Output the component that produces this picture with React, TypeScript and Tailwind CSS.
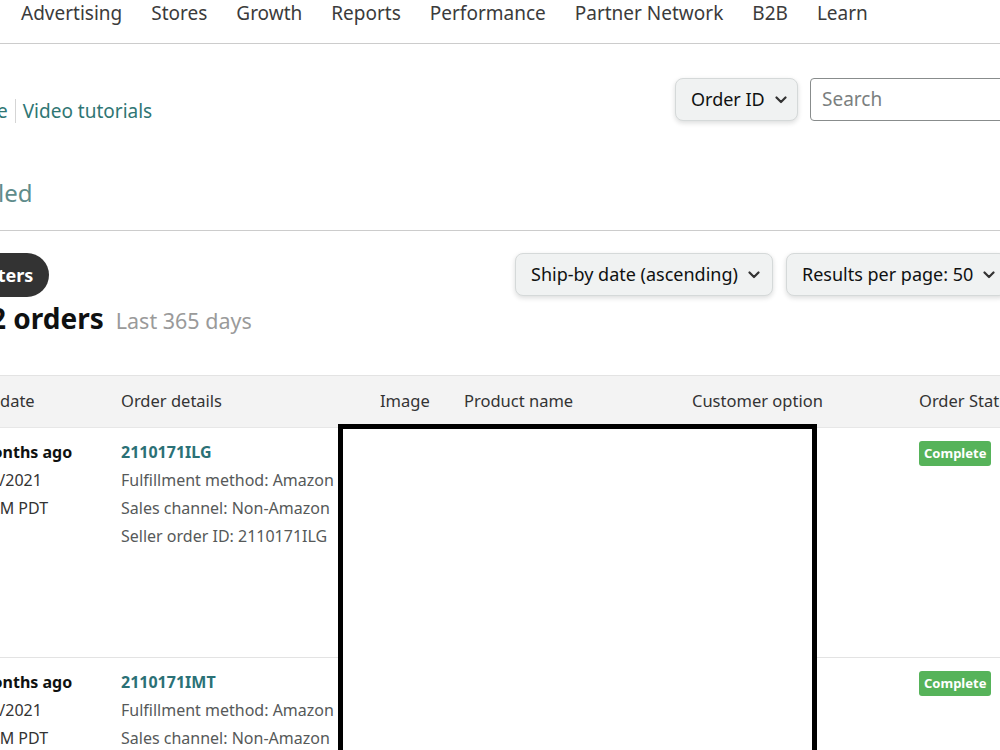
import React from "react";

const navItems = [
  "Advertising",
  "Stores",
  "Growth",
  "Reports",
  "Performance",
  "Partner Network",
  "B2B",
  "Learn",
];

const Chevron = ({ className }: { className?: string }) => (
  <svg viewBox="0 0 12 8" className={className} fill="none">
    <path d="M1.5 1.5L6 6l4.5-4.5" stroke="currentColor" strokeWidth="2.2" strokeLinecap="round" strokeLinejoin="round" />
  </svg>
);

const SelectButton = ({ label, className }: { label: string; className?: string }) => (
  <button
    className={`flex items-center justify-between h-[43px] shrink-0 whitespace-nowrap rounded-[8px] border border-[#d5d9d9] bg-[#f0f2f2] pl-[15px] pr-[12px] text-[18px] text-[#0f1111] shadow-[0_2px_5px_rgba(15,17,17,0.15)] ${className ?? ""}`}
  >
    <span>{label}</span>
    <Chevron className="ml-[10px] w-[12px] h-[8px] shrink-0 text-[#333]" />
  </button>
);

const orders = [{ id: "2110171ILG" }, { id: "2110171IMT" }];

export default function App() {
  return (
    <div className="relative w-[1000px] h-[750px] overflow-hidden bg-white font-['Noto_Sans',sans-serif] text-[#0f1111]">
      {/* top nav */}
      <div className="flex gap-[29px] pl-[21px] h-[44px] border-b border-[#cccccc] text-[19px] leading-[26px] text-[#3b3b3b] whitespace-nowrap">
        {navItems.map((item) => (
          <span key={item}>{item}</span>
        ))}
      </div>

      {/* help links + search */}
      <div className="flex justify-between h-[187px] border-b border-[#cccccc]">
        <div className="flex flex-col">
          <div className="mt-[54px] flex items-center text-[19px] leading-[26px] text-[#2f7674] whitespace-nowrap">
            <span className="-ml-[3px]">e</span>
            <span className="mx-[7px] h-[24px] w-px bg-[#d5d5d5]" />
            <span>Video tutorials</span>
          </div>
          <div className="mt-[53px] -ml-[2px] text-[24px] leading-[32px] text-[#5f8c8b]">led</div>
        </div>
        <div className="flex items-start mt-[34px] gap-[12px] -mr-[10px]">
          <SelectButton label="Order ID" className="w-[123px]" />
          <div className="w-[200px] h-[43px] rounded-l-[4px] border border-[#888c8c] pl-[11px] flex items-center text-[19px] text-[#7b7f7f]">
            Search
          </div>
        </div>
      </div>

      {/* filter row */}
      <div className="flex justify-between items-start pt-[22px]">
        <button className="-ml-[39px] h-[44px] rounded-full bg-[#333333] px-[16px] text-[18px] font-bold text-white">
          Filters
        </button>
        <div className="flex gap-[13px] -mr-[7px]">
          <SelectButton label="Ship-by date (ascending)" className="w-[258px]" />
          <SelectButton label="Results per page: 50" className="w-[221px]" />
        </div>
      </div>

      {/* count */}
      <div className="flex items-baseline mt-[2px] whitespace-nowrap">
        <span className="-ml-[26px] text-[28px] font-bold leading-[38px]">12 orders</span>
        <span className="ml-[12px] text-[21.5px] text-[#9a9a9a]">Last 365 days</span>
      </div>

      {/* table */}
      <div className="relative mt-[38px]">
        <div className="grid grid-cols-[121px_259px_84px_228px_227px_120px] h-[53px] items-center bg-[#f3f3f3] border-t border-[#e3e3e3] border-b border-b-[#e7e7e7] text-[16.5px] text-[#333] whitespace-nowrap">
          <span>date</span>
          <span>Order details</span>
          <span>Image</span>
          <span>Product name</span>
          <span>Customer option</span>
          <span>Order Status</span>
        </div>

        {orders.map((order) => (
          <div
            key={order.id}
            className="grid grid-cols-[121px_259px_84px_228px_227px_120px] h-[230px] border-b border-[#e3e3e3] text-[16px] leading-[28px] whitespace-nowrap"
          >
            <div className="flex flex-col pt-[10px] overflow-hidden">
              <span className="-ml-[23px] font-bold">months ago</span>
              <span className="-ml-[19px] text-[#333]">17/2021</span>
              <span className="-ml-[10px] text-[#333]">PM PDT</span>
            </div>
            <div className="flex flex-col pt-[10px] text-[#565959]">
              <span className="font-bold text-[#2b7176]">{order.id}</span>
              <span>Fulfillment method: Amazon</span>
              <span>Sales channel: Non-Amazon</span>
              <span>Seller order ID: {order.id}</span>
            </div>
            <div />
            <div />
            <div />
            <div className="pt-[10px]">
              <span className="inline-flex items-center h-[25px] px-[5px] rounded-[3px] bg-[#56b35a] text-[13px] font-bold text-white">
                Complete
              </span>
            </div>
          </div>
        ))}

        {/* redaction box over the product columns */}
        <div className="absolute left-[338px] top-[49px] w-[479px] h-[400px] border-[5px] border-black bg-white" />
      </div>
    </div>
  );
}
